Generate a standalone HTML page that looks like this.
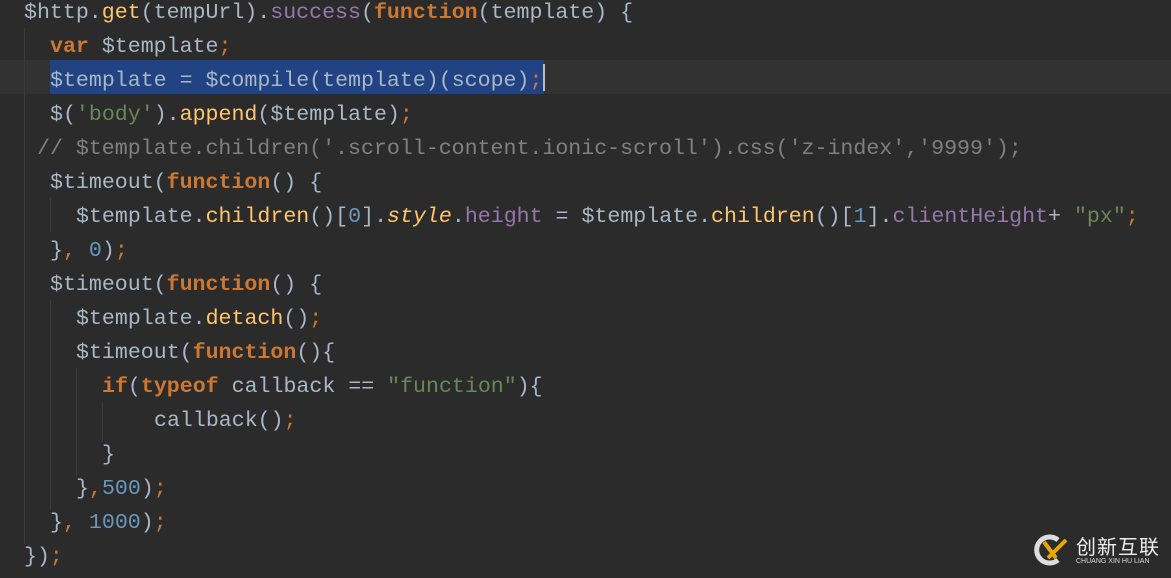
<!DOCTYPE html><html><head><style>
body{margin:0;width:1171px;height:578px;background:#2b2b2b;overflow:hidden;position:relative}
.l{position:absolute;left:0;margin-top:4px;height:34px;line-height:34px;white-space:pre;font-family:"Liberation Mono",monospace;font-size:21.6px;color:#a9b7c6;width:1171px}
.k{color:#cc7832;font-weight:bold}.o{color:#cc7832}.m{color:#ffc66d}.s{color:#6a8759}.n{color:#6897bb}.p{color:#9876aa}.c{color:#808080}.i{font-style:italic;color:#ffc66d}
.g{position:absolute;width:1px;background:#3b3b3b}
</style></head><body>
<div style="position:absolute;left:0;top:60px;width:1171px;height:34px;background:#323232"></div>
<div style="position:absolute;left:50px;top:60px;width:494px;height:34px;background:#214283"></div>
<div style="position:absolute;left:543px;top:64px;width:2px;height:27px;background:#bbb"></div>
<div class="g" style="left:24px;top:28px;height:516px"></div>
<div class="g" style="left:50px;top:198px;height:34px"></div>
<div class="g" style="left:50px;top:300px;height:210px"></div>
<div class="g" style="left:76px;top:368px;height:108px"></div>
<div class="g" style="left:102px;top:402px;height:40px"></div>
<div class="l" style="top:-8px;left:24px">$http.<span class="m">get</span>(tempUrl).<span class="p">success</span>(<span class="k">function</span>(template) {</div>
<div class="l" style="top:26px;left:50px"><span class="k">var</span> $template<span class="o">;</span></div>
<div class="l" style="top:60px;left:50px">$template = $compile(template)(scope)<span class="o">;</span></div>
<div class="l" style="top:94px;left:50px">$(<span class="s">'body'</span>).<span class="m">append</span>($template)<span class="o">;</span></div>
<div class="l c" style="top:128px;left:37px">// $template.children('.scroll-content.ionic-scroll').css('z-index','9999');</div>
<div class="l" style="top:162px;left:50px">$timeout(<span class="k">function</span>() {</div>
<div class="l" style="top:196px;left:76px">$template.<span class="m">children</span>()[<span class="n">0</span>].<span class="i">style</span>.<span class="p">height</span> = $template.<span class="m">children</span>()[<span class="n">1</span>].<span class="p">clientHeight</span>+ <span class="s">"px"</span><span class="o">;</span></div>
<div class="l" style="top:230px;left:50px">}<span class="o">,</span> <span class="n">0</span>)<span class="o">;</span></div>
<div class="l" style="top:264px;left:50px">$timeout(<span class="k">function</span>() {</div>
<div class="l" style="top:298px;left:76px">$template.<span class="m">detach</span>()<span class="o">;</span></div>
<div class="l" style="top:332px;left:76px">$timeout(<span class="k">function</span>(){</div>
<div class="l" style="top:366px;left:102px"><span class="k">if</span>(<span class="k">typeof</span> callback == <span class="s">"function"</span>){</div>
<div class="l" style="top:400px;left:154px">callback()<span class="o">;</span></div>
<div class="l" style="top:434px;left:102px">}</div>
<div class="l" style="top:468px;left:76px">}<span class="o">,</span><span class="n">500</span>)<span class="o">;</span></div>
<div class="l" style="top:502px;left:50px">}<span class="o">,</span> <span class="n">1000</span>)<span class="o">;</span></div>
<div class="l" style="top:536px;left:24px">})<span class="o">;</span></div>
<svg style="position:absolute;left:1034px;top:532px" width="40" height="36" viewBox="0 0 40 36"><path d="M24 8A13 13 0 1 0 24 28" fill="none" stroke="#ddd" stroke-width="5"/><path d="M10 10L22 26M14 26L32 8" stroke="#e8a800" stroke-width="4"/></svg>
<div style="position:absolute;left:1076px;top:535px;font-family:'Noto Sans CJK SC',sans-serif;font-size:20px;color:#eee;line-height:22px;letter-spacing:1px">创新互联</div>
<div style="position:absolute;left:1076px;top:558px;font-family:'Liberation Sans',sans-serif;font-size:7px;color:#ddd">CHUANG XIN HU LIAN</div>
</body></html>
